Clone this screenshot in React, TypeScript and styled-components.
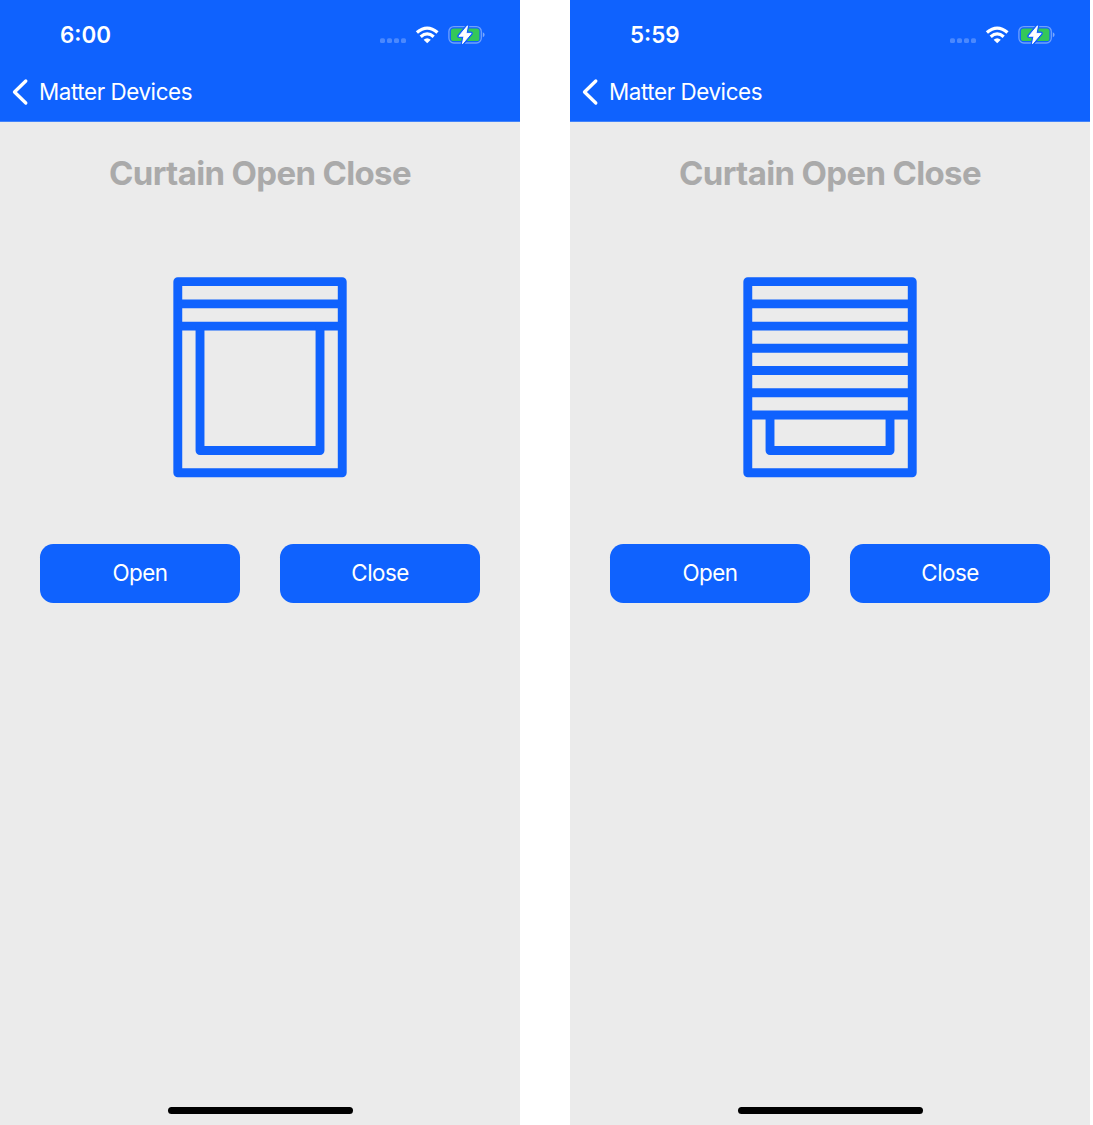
import React from "react";
import styled, { createGlobalStyle } from "styled-components";

const BLUE = "#0f62fe";

const GlobalStyle = createGlobalStyle`
  html, body { margin: 0; padding: 0; background: #fff; }
  * { box-sizing: border-box; }
`;

const Gallery = styled.main`
  display: flex;
  gap: 50px;
  width: 1093px;
  height: 1125px;
  overflow: hidden;
  font-family: Inter, "Liberation Sans", sans-serif;
`;

const Phone = styled.section`
  display: flex;
  flex-direction: column;
  align-items: center;
  flex: none;
  width: 520px;
  height: 1125px;
  padding-bottom: 11px;
  background: #ebebeb;
`;

const Header = styled.header`
  width: 100%;
  height: 122px;
  background: ${BLUE};
  border-bottom: 1px solid #4283fa;
  color: #fff;
`;

const StatusBar = styled.div`
  display: flex;
  justify-content: space-between;
  align-items: center;
  height: 63px;
  padding: 7px 35px 0 60px;
`;

const Clock = styled.time`
  font-size: 22.4px;
  line-height: 28px;
  font-weight: 600;
  letter-spacing: 0;
`;

const StatusIcons = styled.svg`
  display: block;
  width: 106px;
  height: 24px;
`;

const NavBar = styled.nav`
  display: flex;
  align-items: center;
  height: 58px;
  padding-left: 12px;
`;

const BackIcon = styled.svg`
  display: block;
  width: 17px;
  height: 28px;
  margin-right: 10px;
`;

const BackLabel = styled.span`
  font-size: 22.4px;
  line-height: 28px;
  letter-spacing: -0.42px;
`;

const Title = styled.h1`
  margin: 30px 0 0;
  font-size: 33px;
  line-height: 42px;
  font-weight: 700;
  letter-spacing: -0.66px;
  color: #aaa;
`;

const CurtainArt = styled.svg`
  display: block;
  width: 174px;
  height: 201px;
  margin-top: 83px;
`;

const Actions = styled.div`
  display: flex;
  gap: 40px;
  margin-top: 66px;
`;

const ActionButton = styled.button`
  width: 200px;
  height: 58.6px;
  padding: 0;
  border: 0;
  border-radius: 13.3px;
  background: ${BLUE};
  color: #fff;
  font-family: inherit;
  font-size: 22.4px;
  line-height: 28px;
  letter-spacing: -0.55px;
`;

const HomeIndicator = styled.div`
  width: 185px;
  height: 7px;
  margin-top: auto;
  border-radius: 4px;
  background: #000;
`;

const Status = () => (
  <StatusIcons viewBox="379 23 106 24" fill="none">
    <g fill="#fff" opacity="0.25">
      {[380, 387, 394, 401].map((x) => (
        <rect key={x} x={x} y="38.2" width="5" height="4.8" rx="1.6" />
      ))}
    </g>
    <g stroke="#fff" strokeWidth="3.3">
      <path d="M416.9 32.6Q427.2 23.6 437.5 32.6" />
      <path d="M420.7 36.7Q427.2 31.1 433.7 36.7" />
    </g>
    <path d="M423.6 39.7Q427.2 36.7 430.8 39.7L427.2 43.2Z" fill="#fff" />
    <rect x="448.9" y="26.6" width="32.4" height="16.4" rx="4.9" stroke="#fff" strokeOpacity=".4" strokeWidth="1.3" />
    <path d="M482.8 32.3Q484.6 33 484.6 34.8T482.8 37.3Z" fill="#fff" opacity=".45" />
    <rect x="450.9" y="28.6" width="28.5" height="12.4" rx="2.6" fill="#34c759" />
    <path
      d="M467.5 25.8L458.9 36.2H464L462.5 43.7L471.1 33.4H466Z"
      stroke={BLUE} strokeWidth="3.6" strokeLinejoin="round"
    />
    <path
      d="M467.5 25.8L458.9 36.2H464L462.5 43.7L471.1 33.4H466Z"
      fill="#fff" stroke="#fff" strokeWidth="1" strokeLinejoin="round"
    />
  </StatusIcons>
);

const Curtain = ({ slats }: { slats: number }) => (
  <CurtainArt viewBox="0 0 174 201" fill="none">
    <g transform="translate(0.35 0.2) scale(4.4444)" stroke={BLUE} strokeWidth="2" strokeLinejoin="round">
      <rect x="1" y="1" width="37" height="43" />
      {Array.from({ length: slats }, (_, i) => (
        <path key={i} d={`M1 ${6 + i * 5}H38`} />
      ))}
      <path d={`M6 ${1 + slats * 5}V39H33V${1 + slats * 5}`} />
    </g>
  </CurtainArt>
);

const CurtainScreen = ({ time, slats }: { time: string; slats: number }) => (
  <Phone>
    <Header>
      <StatusBar>
        <Clock>{time}</Clock>
        <Status />
      </StatusBar>
      <NavBar>
        <BackIcon viewBox="0 0 17 28" fill="none" stroke="#fff" strokeWidth="3.3" strokeLinecap="round" strokeLinejoin="round">
          <path d="M13.8 3L2.5 14L13.8 25" />
        </BackIcon>
        <BackLabel>Matter Devices</BackLabel>
      </NavBar>
    </Header>
    <Title>Curtain Open Close</Title>
    <Curtain slats={slats} />
    <Actions>
      <ActionButton>Open</ActionButton>
      <ActionButton>Close</ActionButton>
    </Actions>
    <HomeIndicator />
  </Phone>
);

export default function App() {
  return (
    <>
      <GlobalStyle />
      <Gallery>
        <CurtainScreen time="6:00" slats={2} />
        <CurtainScreen time="5:59" slats={6} />
      </Gallery>
    </>
  );
}
